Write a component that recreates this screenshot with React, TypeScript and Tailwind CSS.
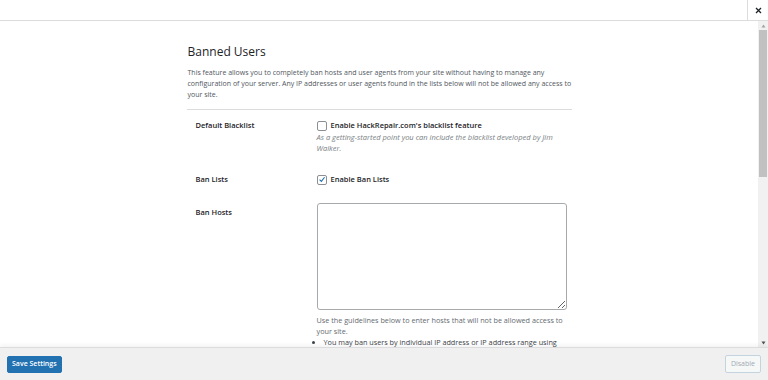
import React from 'react';

const font = { fontFamily: '"Open Sans", "Noto Sans", sans-serif' };

const Checkbox = ({ checked }: { checked?: boolean }) => (
  <span className="w-[10px] h-[10px] border border-[#8c8f94] rounded-[2px] bg-white flex items-center justify-center shrink-0">
    {checked && (
      <svg width="9" height="9" viewBox="0 0 10 10">
        <path d="M2 5.2 L4.2 7.4 L8.2 2.2" fill="none" stroke="#2271b1" strokeWidth="1.4" />
      </svg>
    )}
  </span>
);

const Scrollbar = () => (
  <div className="w-[10px] bg-[#f1f1f1] flex flex-col items-center">
    <div className="h-[9px] flex items-center justify-center">
      <svg width="5" height="4" viewBox="0 0 5 4"><path d="M2.5 0.5 L4.5 3.5 L0.5 3.5Z" fill="#a3a3a3" /></svg>
    </div>
    <div className="w-[8px] h-[147px] bg-[#c1c1c1]" />
    <div className="flex-1" />
    <div className="h-[9px] flex items-center justify-center">
      <svg width="5" height="4" viewBox="0 0 5 4"><path d="M0.5 0.5 L4.5 0.5 L2.5 3.5Z" fill="#505050" /></svg>
    </div>
  </div>
);

export default function App() {
  return (
    <div className="w-[768px] h-[380px] bg-white flex flex-col overflow-hidden text-[#3c434a]" style={font}>
      {/* top bar */}
      <div className="h-[21px] border-b border-[#dcdcde] flex justify-end shrink-0">
        <div className="w-[21px] border-l border-[#dcdcde] flex items-center justify-center text-[#1d2327]">
          <svg width="7" height="7" viewBox="0 0 7 7">
            <path d="M1 1 L6 6 M6 1 L1 6" stroke="#1d2327" strokeWidth="1.3" />
          </svg>
        </div>
      </div>

      <div className="flex-1 flex min-h-0">
        <div className="flex-1 overflow-hidden">
          <div className="w-[385px] mx-auto pt-[23px]">
            <h2 className="text-[12px] leading-[16px] text-[#1d2327] pl-[1px]">Banned Users</h2>
            <p className="text-[7px] leading-[11px] mt-[7px] pl-[1px] text-[#50575e]">
              This feature allows you to completely ban hosts and user agents from your site without having to manage any
              configuration of your server. Any IP addresses or user agents found in the lists below will not be allowed any access to
              your site.
            </p>
            <div className="border-t border-[#dcdcde] mt-[9px]" />

            <div className="flex pt-[10px]">
              <div className="w-[130px] pl-[9px] text-[7.5px] leading-[11px] font-semibold text-[#1d2327]">Default Blacklist</div>
              <div className="flex-1">
                <label className="flex items-center gap-[4px] text-[7.5px] leading-[11px] font-semibold text-[#1d2327]">
                  <Checkbox />
                  Enable HackRepair.com's blacklist feature
                </label>
                <p className="text-[7.5px] leading-[11px] italic text-[#7a7f85] pr-[12px] mt-[1px]">
                  As a getting-started point you can include the blacklist developed by Jim Walker.
                </p>
              </div>
            </div>

            <div className="flex pt-[20px]">
              <div className="w-[130px] pl-[9px] text-[7.5px] leading-[11px] font-semibold text-[#1d2327]">Ban Lists</div>
              <label className="flex items-center gap-[4px] text-[7.5px] leading-[11px] font-semibold text-[#1d2327]">
                <Checkbox checked />
                Enable Ban Lists
              </label>
            </div>

            <div className="flex pt-[18px]">
              <div className="w-[130px] pl-[9px] pt-[4px] text-[7.5px] leading-[11px] font-semibold text-[#1d2327]">Ban Hosts</div>
              <div className="flex-1 pr-[5px]">
                <textarea className="block w-[250px] h-[107px] border border-[#a7aaad] rounded-[3px] bg-white" />
                <p className="text-[7.25px] leading-[11px] text-[#646970] mt-[5px]">
                  Use the guidelines below to enter hosts that will not be allowed access to your site.
                </p>
                <ul className="text-[7.25px] leading-[11px] text-[#3c434a] list-disc pl-[7px]">
                  <li>You may ban users by individual IP address or IP address range using</li>
                </ul>
              </div>
            </div>
          </div>
        </div>
        <Scrollbar />
      </div>

      {/* footer */}
      <div className="h-[33px] shrink-0 bg-[#f0f0f1] border-t border-[#dcdcde] shadow-[0_-2px_4px_rgba(0,0,0,0.05)] flex items-center justify-between px-[7px]">
        <button className="h-[17px] px-[4px] rounded-[2px] bg-[#2271b1] border border-[#2271b1] text-white text-[7px] font-semibold">
          Save Settings
        </button>
        <button className="h-[18px] px-[5px] rounded-[2px] bg-[#f6f7f7] border border-[#c3d4e0] text-[#a0aab4] text-[7px]">
          Disable
        </button>
      </div>
    </div>
  );
}
